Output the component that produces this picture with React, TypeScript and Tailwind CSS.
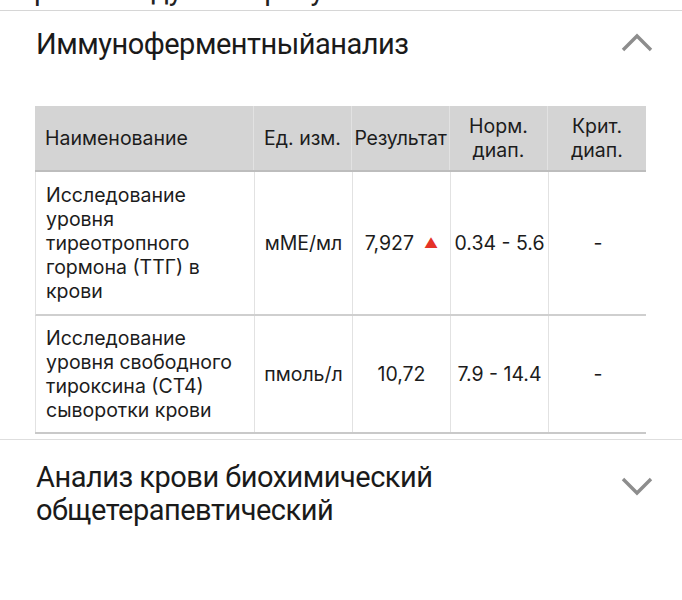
import React from "react";

const Chevron = ({ up }: { up?: boolean }) => (
  <svg width="34" height="22" viewBox="0 0 34 22" className="shrink-0">
    <polyline
      points={up ? "3,19 17,5 31,19" : "3,3 17,17 31,3"}
      fill="none"
      stroke="#8d8d8d"
      strokeWidth="3.4"
    />
  </svg>
);

const cellBase = "border-r border-[#e2e2e2] text-[#1c1c1c]";

export default function App() {
  return (
    <div className="w-[682px] h-[600px] bg-white overflow-hidden">
      <div className="h-[11px] overflow-hidden relative border-b border-[#d6d6d6]">
        <div
          className="absolute left-[34px] bottom-[3px] text-[29px] leading-[34px] text-[#222]"
          style={{ fontFamily: "Roboto, sans-serif" }}
        >
          рекомендуемые результаты
        </div>
      </div>

      <div className="flex items-start justify-between pl-[36px] pr-[28px] pt-[16px]">
        <div
          className="text-[29px] leading-[34px] text-[#1a1a1a] tracking-[-0.5px]"
          style={{ fontFamily: "Roboto, sans-serif" }}
        >
          Иммуноферментныйанализ
        </div>
        <div className="mt-[4px]">
          <Chevron up />
        </div>
      </div>

      <div
        className="ml-[35px] mt-[45px] w-[611px] text-[19.5px] leading-[24px] border-b-2 border-[#c9c9c9]"
        style={{ fontFamily: "Inter, 'Liberation Sans', sans-serif" }}
      >
        <div className="grid grid-cols-[219px_98px_98px_98px_98px] bg-[#d4d4d4] border-b-2 border-[#bdbdbd]">
          <div className={`${cellBase} flex items-center pl-[10px] h-[64px]`}>Наименование</div>
          <div className={`${cellBase} flex items-center justify-center text-center`}>Ед. изм.</div>
          <div className={`${cellBase} flex items-center justify-center text-center whitespace-nowrap tracking-[-0.2px]`}>Результат</div>
          <div className={`${cellBase} flex items-center justify-center text-center`}>
            Норм.
            <br />
            диап.
          </div>
          <div className="flex items-center justify-center text-center text-[#1c1c1c]">
            Крит.
            <br />
            диап.
          </div>
        </div>

        <div className="grid grid-cols-[219px_98px_98px_98px_98px] border-b-2 border-[#cfcfcf] border-l border-l-[#e2e2e2]">
          <div className={`${cellBase} pl-[10px] pr-[12px] py-[11px]`}>
            Исследование уровня тиреотропного гормона (ТТГ) в крови
          </div>
          <div className={`${cellBase} flex items-center justify-center`}>мМЕ/мл</div>
          <div className={`${cellBase} flex items-center justify-center gap-[10px]`}>
            <span>7,927</span>
            <span className="text-[#e53227] text-[14px]">▲</span>
          </div>
          <div className={`${cellBase} flex items-center justify-center whitespace-nowrap`}>0.34 - 5.6</div>
          <div className="flex items-center justify-center text-[#1c1c1c]">-</div>
        </div>

        <div className="grid grid-cols-[219px_98px_98px_98px_98px] border-l border-l-[#e2e2e2]">
          <div className={`${cellBase} pl-[10px] pr-[12px] py-[10px]`}>
            Исследование уровня свободного тироксина (СТ4) сыворотки крови
          </div>
          <div className={`${cellBase} flex items-center justify-center`}>пмоль/л</div>
          <div className={`${cellBase} flex items-center justify-center`}>10,72</div>
          <div className={`${cellBase} flex items-center justify-center whitespace-nowrap`}>7.9 - 14.4</div>
          <div className="flex items-center justify-center text-[#1c1c1c]">-</div>
        </div>
      </div>

      <div className="mt-[5px] border-t border-[#dedede] flex items-start justify-between pl-[36px] pr-[28px] pt-[21px]">
        <div
          className="text-[29px] leading-[33px] text-[#1a1a1a] tracking-[-0.5px]"
          style={{ fontFamily: "Roboto, sans-serif" }}
        >
          Анализ крови биохимический
          <br />
          общетерапевтический
        </div>
        <div className="mt-[15px]">
          <Chevron />
        </div>
      </div>
    </div>
  );
}
